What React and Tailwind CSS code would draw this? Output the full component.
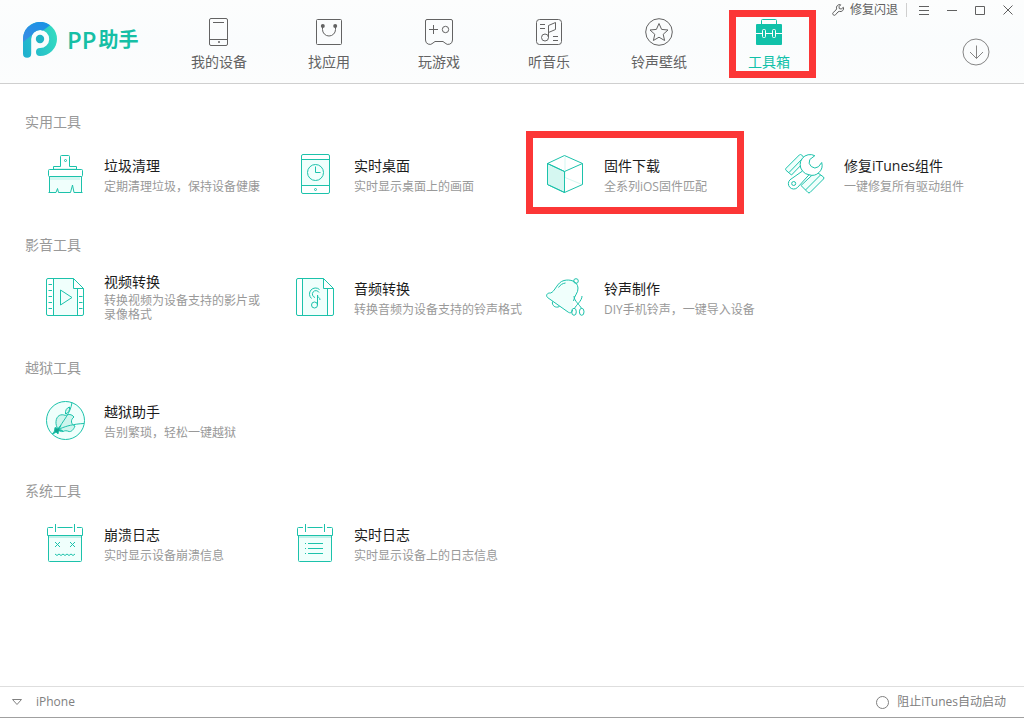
import { useState } from "react"

const navItems = [
  { id: "device", label: "我的设备", Icon: DeviceIcon },
  { id: "apps", label: "找应用", Icon: BagIcon },
  { id: "games", label: "玩游戏", Icon: GameIcon },
  { id: "music", label: "听音乐", Icon: MusicIcon },
  { id: "ringtone", label: "铃声壁纸", Icon: StarIcon },
  { id: "toolbox", label: "工具箱", Icon: ToolboxIcon, framed: true },
]

const sections = [
  {
    title: "实用工具",
    tools: [
      { name: "垃圾清理", desc: "定期清理垃圾，保持设备健康", Icon: BrushIcon },
      { name: "实时桌面", desc: "实时显示桌面上的画面", Icon: ScreenIcon },
      { name: "固件下载", desc: "全系列iOS固件匹配", Icon: CubeIcon, framed: true },
      { name: "修复iTunes组件", desc: "一键修复所有驱动组件", Icon: RepairIcon },
    ],
  },
  {
    title: "影音工具",
    tools: [
      { name: "视频转换", desc: "转换视频为设备支持的影片或\n录像格式", Icon: VideoIcon },
      { name: "音频转换", desc: "转换音频为设备支持的铃声格式", Icon: AudioIcon },
      { name: "铃声制作", desc: "DIY手机铃声，一键导入设备", Icon: BellIcon },
    ],
  },
  {
    title: "越狱工具",
    tools: [{ name: "越狱助手", desc: "告别繁琐，轻松一键越狱", Icon: JailbreakIcon }],
  },
  {
    title: "系统工具",
    tools: [
      { name: "崩溃日志", desc: "实时显示设备崩溃信息", Icon: CrashIcon },
      { name: "实时日志", desc: "实时显示设备上的日志信息", Icon: LogIcon },
    ],
  },
]

export default function App() {
  const [active, setActive] = useState("toolbox")
  const [blockITunes, setBlockITunes] = useState(false)

  return (
    <div className="flex min-h-screen flex-col bg-white pb-px font-['Open_Sans','Noto_Sans_CJK_SC',sans-serif]">
      <header className="flex h-[84px] border-b border-[#cfcfcf] bg-linear-to-b from-[#fcfdfd] via-[#fafcfd] to-[#fcfdfd]">
        <div className="flex w-[164px] shrink-0 items-start pt-[22px] pl-[23px]">
          <LogoIcon />
          <h1 className="ml-[9px] flex h-9 items-center gap-[2px] font-semibold text-[#16bfa5]">
            <span className="text-2xl">PP</span>
            <span className="text-xl">助手</span>
          </h1>
        </div>

        <nav className="flex shrink-0">
          {navItems.map((item) => (
            <NavItem
              key={item.id}
              item={item}
              active={active === item.id}
              onClick={() => setActive(item.id)}
            />
          ))}
        </nav>

        <div className="flex flex-1 flex-col items-end">
          <WindowControls />
          <button aria-label="下载" className="mt-[18px] mr-[34px]">
            <svg width="28" height="28" viewBox="0 0 28 28" fill="none" stroke="#858585">
              <circle cx="14" cy="14" r="13" />
              <path d="M14.5 7.5v13M8 14l6.500 6.500L21 14" />
            </svg>
          </button>
        </div>
      </header>

      <main className="flex flex-1 flex-col gap-[31px] pt-7 pb-8">
        {sections.map((section) => (
          <section key={section.title}>
            <h2 className="pl-[25px] text-sm leading-5 text-[#999]">{section.title}</h2>
            <div className="mt-3 grid grid-cols-[250fr_250fr_240fr_239fr] pl-[45px]">
              {section.tools.map((tool) => (
                <ToolItem key={tool.name} tool={tool} />
              ))}
            </div>
          </section>
        ))}
      </main>

      <footer className="flex h-8 items-center justify-between border-t border-b border-t-[#dedede] border-b-[#a0a0a0] pr-[18px] pl-3 text-xs text-[#808080]">
        <button className="flex items-center gap-[14px]">
          <svg width="10" height="8" viewBox="0 0 10 8" fill="none" stroke="#808080">
            <path d="M.5 1.500h9L5 6.500z" />
          </svg>
          iPhone
        </button>
        <label className="flex items-center gap-2">
          <input
            type="checkbox"
            checked={blockITunes}
            onChange={(e) => setBlockITunes(e.target.checked)}
            className="size-[13px] appearance-none rounded-full border border-[#808080] checked:bg-[#10c1a9]"
          />
          阻止iTunes自动启动
        </label>
      </footer>
    </div>
  )
}

function NavItem({ item, active, onClick }) {
  const { Icon, label, framed } = item
  return (
    <button
      onClick={onClick}
      className={`relative flex w-[110px] flex-col items-center pt-[18px] text-sm ${
        active ? "text-[#10c1a9]" : "text-[#636363]"
      }`}
    >
      <Icon />
      <span className="mt-[6px] leading-5">{label}</span>
      {framed && (
        <span className="pointer-events-none absolute top-[10px] left-[15px] h-[68px] w-[87px] border-7 border-[#fc3636]" />
      )}
    </button>
  )
}

function WindowControls() {
  return (
    <div className="flex h-5 items-center pr-[2px] text-[#606060]">
      <button className="flex items-center gap-[6px] pr-2 text-xs">
        <svg width="12" height="12" viewBox="0 0 12 12" fill="none" stroke="currentColor">
          <path d="M8.700.8A3.200 3.200 0 0 0 4.600 4.900L3.900 6.100 1.200 8.500A1.500 1.500 0 1 0 3.500 10.800L6 7.900 7.300 7.400A3.200 3.200 0 0 0 11.400 3.300L9.200 5 7.300 4.600 7 2.700z" />
        </svg>
        修复闪退
      </button>
      <span className="mr-[3px] h-[14px] w-px bg-[#cfcfcf]" />
      <button aria-label="菜单" className="flex w-7 justify-center">
        <svg width="10" height="10" viewBox="0 0 10 10" stroke="currentColor">
          <path d="M0 1.500h10M0 5.500h10M0 9.500h10" />
        </svg>
      </button>
      <button aria-label="最小化" className="flex w-7 justify-center">
        <svg width="10" height="10" viewBox="0 0 10 10" stroke="currentColor">
          <path d="M0 5.500h10" />
        </svg>
      </button>
      <button aria-label="最大化" className="flex w-7 justify-center">
        <svg width="10" height="10" viewBox="0 0 10 10" fill="none" stroke="currentColor">
          <path d="M.5 1.500h9v8h-9z" />
        </svg>
      </button>
      <button aria-label="关闭" className="flex w-7 justify-center">
        <svg width="10" height="10" viewBox="0 0 10 10" stroke="currentColor">
          <path d="M.5.5l9 9M9.500.5l-9 9" />
        </svg>
      </button>
    </div>
  )
}

function ToolItem({ tool }) {
  const { Icon, name, desc, framed } = tool
  const twoLines = desc.includes("\n")
  return (
    <button className="relative flex h-[60px] items-center gap-[19px] text-left">
      <Icon />
      <span className={`flex flex-col ${twoLines ? "gap-[2px]" : "gap-1 pt-[2px]"}`}>
        <span className="text-sm leading-5 text-[#1c1c1c]">{name}</span>
        <span className="text-xs leading-[14px] whitespace-pre-line text-[#999]">{desc}</span>
      </span>
      {framed && (
        <span className="pointer-events-none absolute -top-[13px] -left-[19px] h-[83px] w-[218px] border-7 border-[#fc3636]" />
      )}
    </button>
  )
}

function LogoIcon() {
  return (
    <svg width="35" height="36" viewBox="0 0 35 36">
      <defs>
        <linearGradient id="logoRing" x1="0" y1="0.6" x2="1" y2="0.3">
          <stop offset="0" stopColor="#20b2cf" />
          <stop offset="1" stopColor="#34dcc0" />
        </linearGradient>
        <linearGradient id="logoTop" x1="0" y1="1" x2="1" y2="0">
          <stop offset="0" stopColor="#3d8be4" />
          <stop offset="1" stopColor="#1593e6" />
        </linearGradient>
      </defs>
      <path
        d="M0 17A17 17 0 1 1 17 34A4 4 0 0 1 17 26A9 9 0 1 0 8.200 17V31.700A4.100 4.100 0 0 1 0 31.700z"
        fill="url(#logoRing)"
      />
      <path d="M0 20V17A17 17 0 0 1 27 3.300L20 8.500A9 9 0 0 0 9 13z" fill="url(#logoTop)" />
      <circle cx="17" cy="17" r="4.200" fill="#1fb2c4" />
    </svg>
  )
}

function NavSvg({ children }) {
  return (
    <svg width="28" height="28" viewBox="0 0 28 28" fill="none" stroke="currentColor">
      {children}
    </svg>
  )
}

function DeviceIcon() {
  return (
    <NavSvg>
      <rect x="4.500" y=".5" width="18" height="27" rx="1.500" />
      <path d="M8 4.500h11M4.500 21.500h18" />
      <circle cx="14" cy="24" r="1" fill="currentColor" stroke="none" />
    </NavSvg>
  )
}

function BagIcon() {
  return (
    <NavSvg>
      <rect x="1.500" y="1.500" width="25" height="25" rx="1" />
      <path d="M7.500 8v3.500a6.500 6.500 0 0 0 13 0V8" />
      <circle cx="7.800" cy="8" r="2" fill="currentColor" stroke="none" />
      <circle cx="20.200" cy="8" r="2" fill="currentColor" stroke="none" />
    </NavSvg>
  )
}

function GameIcon() {
  return (
    <NavSvg>
      <path d="M2 1.500h24a1.500 1.500 0 0 1 1.500 1.500V22a4.300 4.300 0 0 1-7.500 3l-2-1.500h-8L8 25a4.300 4.300 0 0 1-7.500-3V3A1.500 1.500 0 0 1 2 1.500z" />
      <path d="M4 11.500h9M8.500 7v9" />
      <circle cx="20.500" cy="11.500" r="3.200" />
    </NavSvg>
  )
}

function MusicIcon() {
  return (
    <NavSvg>
      <rect x="1.500" y="1.500" width="25" height="25" rx="3" />
      <circle cx="10" cy="19.500" r="3.500" />
      <path d="M13.500 19.500v-12l7-3v7l-7 3M5 6.500h5M5 10.500h5M18 18.500h5M18 22.500h5" />
    </NavSvg>
  )
}

function StarIcon() {
  return (
    <NavSvg>
      <circle cx="14" cy="14" r="13.300" />
      <path d="M14 5.500l2.600 5.900 6.400.6-4.800 4.300 1.400 6.200-5.600-3.300-5.600 3.300 1.400-6.200L5 12l6.400-.6z" />
    </NavSvg>
  )
}

function ToolboxIcon() {
  return (
    <NavSvg>
      <path d="M6.500 7V2.500a1 1 0 0 1 1-1h13a1 1 0 0 1 1 1V7" />
      <rect x="1" y="6" width="26" height="21" rx="1" fill="currentColor" stroke="none" />
      <path d="M1 15.500h6M11 15.500h6M21 15.500h6" stroke="#fff" />
      <rect x="7.500" y="11.500" width="3" height="8" rx="1" stroke="#fff" />
      <rect x="17.500" y="11.500" width="3" height="8" rx="1" stroke="#fff" />
    </NavSvg>
  )
}

function ToolSvg({ children }) {
  return (
    <svg
      width="40"
      height="40"
      viewBox="0 0 40 40"
      fill="none"
      stroke="#1cc2ab"
      strokeLinejoin="round"
      className="shrink-0"
    >
      {children}
    </svg>
  )
}

function BrushIcon() {
  return (
    <ToolSvg>
      <path d="M4.500 23h31v15.500h-7l-1.500-7.500-2 7.500h-12l-1-4-1.500 4h-6z" fill="#f0fffc" stroke="none" />
      <path d="M5 23h30v3H5z" fill="#d5f7f1" stroke="none" />
      <path d="M8.500 15.500v-3h7v-10a1 1 0 0 1 1-1h7a1 1 0 0 1 1 1v10h7v3" />
      <path d="M9 14.500h22" stroke="#d5f7f1" />
      <rect x="3.500" y="15.500" width="34" height="7" rx="1" />
      <path d="M4.500 22.500v16M36.500 22.500v16M3.500 38.500h7.500l1.500-4 1 4h12l2-7.500 1.500 7.500h8.500" />
      <circle cx="20.500" cy="6.500" r="1" />
    </ToolSvg>
  )
}

function ScreenIcon() {
  return (
    <ToolSvg>
      <path d="M6.500 5.500h28v26h-28z" fill="#f0fffc" />
      <rect x="6.500" y=".5" width="28" height="39" rx="1.500" />
      <circle cx="20.500" cy="18.500" r="8" />
      <path d="M20.500 12.500v6h5" />
      <circle cx="20.500" cy="35.500" r="1" />
    </ToolSvg>
  )
}

function CubeIcon() {
  return (
    <ToolSvg>
      <path d="M2.500 9.500l17 8v21l-17-8z" fill="#d5f7f1" />
      <path d="M20 2v21.500L2.500 30.500M20 23.500l17 7" stroke="#d5f7f1" />
      <path d="M19.500 1.500l18 8v21l-18 8-17-8v-21zM2.500 9.500l17 8 18-8M19.500 17.500v21" />
    </ToolSvg>
  )
}

function RepairIcon() {
  return (
    <ToolSvg>
      <path d="M14.500.8L1 14.300a1.500 1.500 0 0 0 0 2L6.500 21 21 6 16.500.8a1.500 1.500 0 0 0-2 0z" fill="#f0fffc" />
      <path d="M4 18.500L18.500 3.500" />
      <path d="M31 17.500l7.500 5.500a1.500 1.500 0 0 1 0 2L25 38.500a1.500 1.500 0 0 1-2 0L16 31.500z" fill="#f0fffc" />
      <path d="M35.500 21L20.500 36" />
      <path
        d="M17.500 17L5 25.800A5.300 5.300 0 1 0 12.500 33.500L24 20.800A10 10 0 0 0 36.700 8.500L33.500 12.700A5.800 5.800 0 0 1 24.800 5.500L29.800 1.700A10 10 0 0 0 17.500 17z"
        fill="#fff"
      />
      <path d="M17.500 17a10 10 0 0 0 6.500 3.800" />
      <circle cx="8.700" cy="29.500" r="2" />
    </ToolSvg>
  )
}

function VideoIcon() {
  return (
    <ToolSvg>
      <path d="M8.500 1.500h20v10h4v27h-24z" fill="#f0fffc" stroke="none" />
      <path d="M28.500 1.500H3a1.500 1.500 0 0 0-1.500 1.500v34A1.500 1.500 0 0 0 3 38.500h34a1.500 1.500 0 0 0 1.500-1.500V11.500zV11.500h10M8.500 1.500v37M32.500 11.500v27" />
      <path d="M3.500 7.500H7M3.500 13.500H7M3.500 19.500H7M3.500 25.500H7M3.500 31.500H7M34 19.500h3.500M34 25.500h3.500M34 31.500h3.500" />
      <path d="M15.500 13v15l11.500-7.500z" />
    </ToolSvg>
  )
}

function AudioIcon() {
  return (
    <ToolSvg>
      <path d="M7.500 1.500h21v10h4v27h-25z" fill="#f0fffc" stroke="none" />
      <path d="M28.500 1.500H3a1.500 1.500 0 0 0-1.500 1.500v34A1.500 1.500 0 0 0 3 38.500h34a1.500 1.500 0 0 0 1.500-1.500V11.500zV11.500h10M7.500 1.500v37M32.500 11.500v27" />
      <path d="M24.500 12.500a6 6 0 1 0-8 9M24 15.500a3.500 3.500 0 1 0-4 5" />
      <circle cx="19.500" cy="28" r="3" />
      <path d="M22.500 28v-10c0 3 2.500 2 2.500 5" />
    </ToolSvg>
  )
}

function BellIcon() {
  return (
    <ToolSvg>
      <path
        d="M27.500 33c-.5 3-2.500 3.500-4.500 2L2.500 20.500c-2-2-.5-4.800 3-4.500C10 15 12 5 19 3.500c6-1.500 13.500.5 14 7.500.3 5-3.500 7-4.500 13"
        fill="#f0fffc"
      />
      <path d="M13.500 10.500c2-3 4-4 7-4.500" />
      <circle cx="31" cy="4" r="2.300" />
      <path d="M7.500 24.500c-1 4 3 7 7 5M29 19c0 5 6 9 7.500 12.500M37 19c0 5-6 9-7.500 12.500" />
      <ellipse cx="29" cy="34.800" rx="2.300" ry="3.500" />
      <ellipse cx="36.700" cy="34.800" rx="2.300" ry="3.500" />
    </ToolSvg>
  )
}

function JailbreakIcon() {
  return (
    <ToolSvg>
      <circle cx="20.500" cy="20.500" r="19" fill="#f0fffc" />
      <path
        d="M20.500 15.500c3-1.500 6-1.500 8.500 1.500-4 3-3 7.500 1 9-1.500 4-4 6-6 5.500-2.500-1-4-1-6 0-4 1-7.500-5-7-10 .5-6 5-8 9.500-6z"
        fill="#cef5ed"
      />
      <path d="M20.500 14c-.5-3.500 1-6 4-7 .5 3.500-1 6-4 7z" fill="#cef5ed" />
      <path d="M27 2.500c-1.500 11-9 18-14.500 28L7 34M12.500 30.500l3-2c6-2.500 13-4.500 23.500-5M12.500 30.500l3.500-5" />
      <path d="M10 27.500l3 1 2-2-.5 3 3 1-4 .5-.5 3-2-2-3 2 1.500-3z" fill="#13a48f" />
    </ToolSvg>
  )
}

function CalendarBase() {
  return (
    <>
      <path d="M3.500 12.500h33v25a1 1 0 0 1-1 1h-31a1 1 0 0 1-1-1z" fill="#f0fffc" />
      <path d="M4 13h32v2H4z" fill="#c3f1e9" stroke="none" />
      <path d="M8 4.500H3.500a1 1 0 0 0-1 1v7h35v-7a1 1 0 0 0-1-1H32M12.500 4.500h15M10.500 1v8M29.500 1v8" />
    </>
  )
}

function CrashIcon() {
  return (
    <ToolSvg>
      <CalendarBase />
      <path d="M10 19l5 5M15 19l-5 5M25 19l5 5M30 19l-5 5" />
      <path d="M10 31l2 1.500 2-1.500 2 1.500 2-1.500 2 1.500 2-1.500 2 1.500 2-1.500 2 1.500 2-1.500" />
    </ToolSvg>
  )
}

function LogIcon() {
  return (
    <ToolSvg>
      <CalendarBase />
      <path d="M13 20.500h15M13 25.500h15M13 30.500h15M10 20.500h1M10 25.500h1M10 30.500h1" />
    </ToolSvg>
  )
}
